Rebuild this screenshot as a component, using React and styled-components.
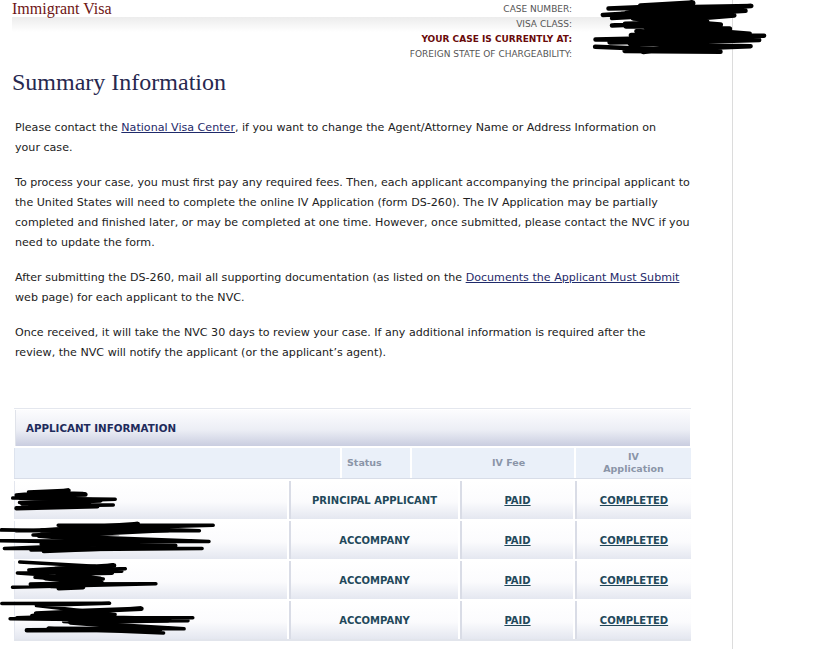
import React from 'react';
import styled, { createGlobalStyle } from 'styled-components';

const GlobalStyle = createGlobalStyle`
  html, body {
    margin: 0;
    padding: 0;
    background: #fff;
  }
`;

const Page = styled.div`
  position: relative;
  width: 732px;
  min-height: 649px;
  border-right: 1px solid #dcdcdc;
  font-family: 'DejaVu Sans', Verdana, sans-serif;
  color: #222;
`;

const Masthead = styled.div`
  display: flex;
  height: 62px;
  padding-left: 12px;
  background: linear-gradient(#ececec, #ffffff) no-repeat;
  background-position: 12px 17px;
  background-size: 600px 15px;
`;

const SiteTitle = styled.div`
  flex: 1;
  font-family: 'Liberation Serif', 'Times New Roman', serif;
  font-size: 16px;
  line-height: 17px;
  color: #6e1414;
`;

const CaseLabels = styled.div`
  padding-top: 2px;
  text-align: right;
  font-size: 9px;
  line-height: 15px;
  white-space: nowrap;
`;

const CaseLabel = styled.div`
  color: ${(p) => (p.$alert ? '#6a0a0a' : '#555')};
  font-weight: ${(p) => (p.$alert ? 'bold' : 'normal')};
`;

const CaseValues = styled.div`
  width: 160px;
`;

const Heading = styled.h1`
  margin: 6px 0 22px 12px;
  font-family: 'Liberation Serif', 'Times New Roman', serif;
  font-weight: normal;
  font-size: 24px;
  line-height: 28px;
  color: #27284f;
`;

const Body = styled.div`
  padding-left: 15px;
  width: 676px;
`;

const Para = styled.p`
  margin: 0 0 15px;
  max-width: ${(p) => p.$width || 676}px;
  font-size: 11.1px;
  line-height: 20px;
  color: #222;
`;

const Link = styled.a`
  color: #1f2a6a;
  text-decoration: underline;
`;

const Panel = styled.div`
  margin: 45px 0 0 14px;
  width: 677px;
  border-top: 1px solid #e4e7ee;
  border-bottom: 2px solid #e2e5ec;
`;

const PanelTitle = styled.div`
  height: 36px;
  margin: 1px 1px 2px 1px;
  display: flex;
  align-items: center;
  padding-left: 10px;
  background: linear-gradient(#fcfcfe 0%, #eceef5 55%, #c9cde0 100%);
  border-left: 1px solid #e0e3ea;
  font-size: 10.3px;
  font-weight: bold;
  color: #1e2b5c;
`;

const HeadRow = styled.div`
  display: grid;
  grid-template-columns: 326px 70px 164px 117px;
  height: 30px;
  border-bottom: 1px solid #d8dde8;
`;

const HeadCell = styled.div`
  display: flex;
  align-items: center;
  justify-content: ${(p) => p.$justify || 'center'};
  padding-left: ${(p) => p.$pad || 0}px;
  background: #eaf0f9;
  border-left: ${(p) => (p.$first ? '1px solid #dde3ee' : '2px solid #ffffff')};
  font-size: 9.5px;
  font-weight: bold;
  line-height: 12px;
  text-align: center;
  color: #8a95a8;
`;

const Row = styled.div`
  position: relative;
  display: grid;
  grid-template-columns: 273px 171px 115px 118px;
  height: 38px;
  margin-top: 2px;
`;

const Cell = styled.div`
  display: flex;
  align-items: center;
  justify-content: center;
  background: linear-gradient(#ffffff 0%, #fbfbfd 55%, #e4e7f0 100%);
  border-left: ${(p) => (p.$first ? '1px solid #e3e6ee' : '2px solid #d9dce6')};
  margin-left: ${(p) => (p.$first ? 0 : 2)}px;
  font-size: 10px;
  font-weight: bold;
  color: #22485a;
`;

const CellLink = styled.a`
  color: #22485a;
  text-decoration: underline;
`;

const Redaction = styled.svg`
  position: absolute;
  overflow: visible;
  pointer-events: none;
`;

// scribbled-out personal data
function scribble(w, h, n, seed) {
  let s = seed;
  const rnd = () => {
    s = (s * 9301 + 49297) % 233280;
    return s / 233280;
  };
  let d = `M ${(rnd() * w * 0.2).toFixed(1)} ${(rnd() * h * 0.3).toFixed(1)}`;
  for (let i = 0; i < n; i++) {
    const y = (i / n) * h * 0.85 + rnd() * h * 0.2;
    const x = i % 2 ? rnd() * w * 0.3 : w * (0.5 + rnd() * 0.5);
    d += ` L ${x.toFixed(1)} ${y.toFixed(1)}`;
  }
  return d;
}

const Scribble = ({ x, y, w, h, n, seed, width = 3.5 }) => (
  <Redaction style={{ left: x, top: y }} width={w} height={h}>
    <path d={scribble(w, h, n, seed)} fill="none" stroke="#000" strokeWidth={width} strokeLinejoin="round" strokeLinecap="round" />
    <path d={scribble(w * 0.7, h * 0.9, n, seed + 7)} transform={`translate(${w * 0.12} 2)`} fill="none" stroke="#000" strokeWidth={width + 1} strokeLinejoin="round" strokeLinecap="round" />
  </Redaction>
);

const applicants = [
  { status: 'PRINCIPAL APPLICANT', blot: { x: 0, y: 8, w: 125, h: 22, n: 10, seed: 11 } },
  { status: 'ACCOMPANY', blot: { x: 0, y: 0, w: 216, h: 34, n: 12, seed: 29 } },
  { status: 'ACCOMPANY', blot: { x: 10, y: 1, w: 150, h: 30, n: 12, seed: 53 } },
  { status: 'ACCOMPANY', blot: { x: 0, y: 2, w: 218, h: 34, n: 11, seed: 71 } },
];

function App() {
  return (
    <>
      <GlobalStyle />
      <Page>
        <Masthead>
          <SiteTitle>Immigrant Visa</SiteTitle>
          <CaseLabels>
            <CaseLabel>CASE NUMBER:</CaseLabel>
            <CaseLabel>VISA CLASS:</CaseLabel>
            <CaseLabel $alert>YOUR CASE IS CURRENTLY AT:</CaseLabel>
            <CaseLabel>FOREIGN STATE OF CHARGEABILITY:</CaseLabel>
          </CaseLabels>
          <CaseValues />
        </Masthead>
        <Scribble x={588} y={0} w={180} h={56} n={20} seed={5} width={4.5} />

        <Heading>Summary Information</Heading>

        <Body>
          <Para $width={660}>
            Please contact the <Link href="#">National Visa Center</Link>, if you want to change the Agent/Attorney Name or Address Information on your case.
          </Para>
          <Para>
            To process your case, you must first pay any required fees. Then, each applicant accompanying the principal applicant to the United States will need to complete the online IV Application (form DS-260). The IV Application may be partially completed and finished later, or may be completed at one time. However, once submitted, please contact the NVC if you need to update the form.
          </Para>
          <Para>
            After submitting the DS-260, mail all supporting documentation (as listed on the <Link href="#">Documents the Applicant Must Submit</Link> web page) for each applicant to the NVC.
          </Para>
          <Para $width={660}>
            Once received, it will take the NVC 30 days to review your case. If any additional information is required after the review, the NVC will notify the applicant (or the applicant’s agent).
          </Para>
        </Body>

        <Panel>
          <PanelTitle>APPLICANT INFORMATION</PanelTitle>
          <HeadRow>
            <HeadCell $first />
            <HeadCell $justify="flex-start" $pad={5}>Status</HeadCell>
            <HeadCell $justify="flex-start" $pad={80}>IV Fee</HeadCell>
            <HeadCell>IV<br />Application</HeadCell>
          </HeadRow>
          {applicants.map((a, i) => (
            <Row key={i}>
              <Cell $first />
              <Cell>{a.status}</Cell>
              <Cell><CellLink href="#">PAID</CellLink></Cell>
              <Cell><CellLink href="#">COMPLETED</CellLink></Cell>
              <Scribble {...a.blot} x={a.blot.x - 14} />
            </Row>
          ))}
        </Panel>
      </Page>
    </>
  );
}

export default App;
